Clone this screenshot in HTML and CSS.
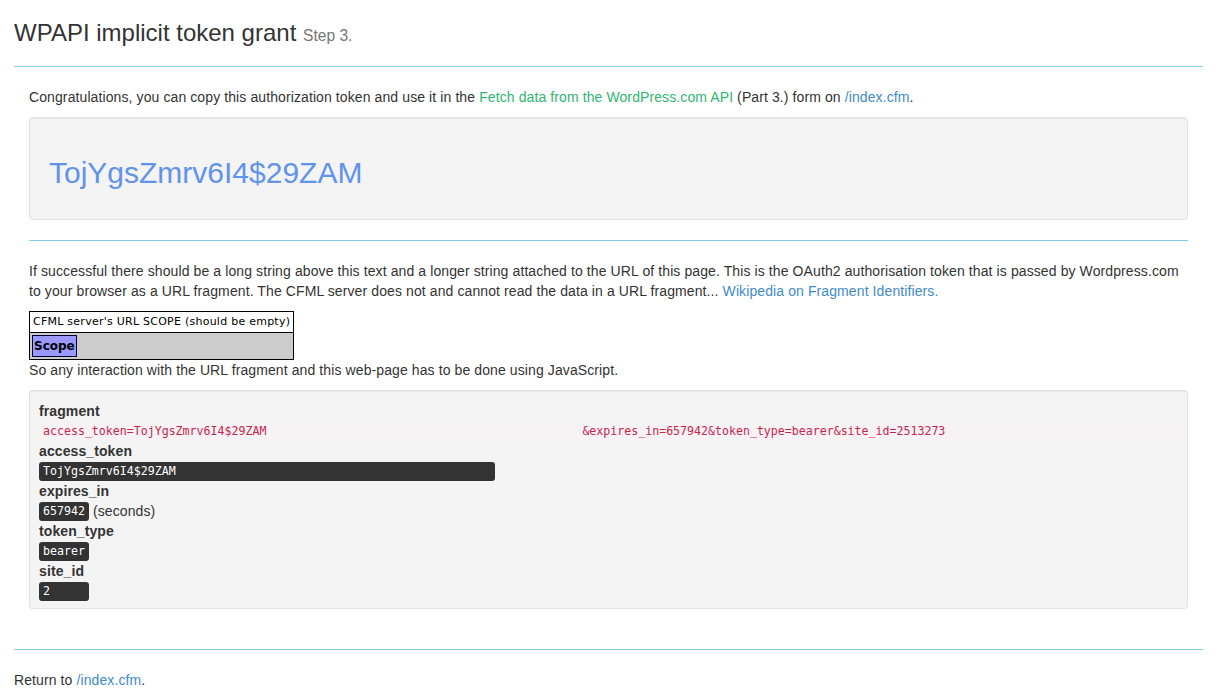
FILE: index.html
```html
<!DOCTYPE html>
<html lang="en">
<head>
<meta charset="utf-8">
<title>WPAPI implicit token grant</title>
<link rel="stylesheet" href="styles.css">
</head>
<body>
<div class="page">
  <h3 class="title">WPAPI implicit token grant <small>Step 3.</small></h3>
  <div class="rule"></div>
  <div class="section">
    <p>Congratulations, you can copy this authorization token and use it in the <a class="green" href="#">Fetch data from the WordPress.com API</a> (Part 3.) form on <a href="#">/index.cfm</a>.</p>
    <div class="well">
      <h2 class="token">TojYgsZmrv6I4$29ZAM</h2>
    </div>
    <div class="rule"></div>
    <p>If successful there should be a long string above this text and a longer string attached to the URL of this page. This is the OAuth2 authorisation token that is passed by Wordpress.com to your browser as a URL fragment. The CFML server does not and cannot read the data in a URL fragment... <a href="#">Wikipedia on Fragment Identifiers.</a></p>
    <div class="scope">
      <div class="scope-head">CFML server's URL SCOPE (should be empty)</div>
      <div class="scope-body"><span class="scope-key">Scope</span></div>
    </div>
    <p class="after-scope">So any interaction with the URL fragment and this web-page has to be done using JavaScript.</p>
    <div class="well well-sm">
      <div class="label">fragment</div>
      <code class="frag"><span>access_token=TojYgsZmrv6I4$29ZAM</span><span class="frag-rest">&amp;expires_in=657942&amp;token_type=bearer&amp;site_id=2513273</span></code>
      <div class="label">access_token</div>
      <div class="line"><span class="kbd kbd-wide">TojYgsZmrv6I4$29ZAM</span></div>
      <div class="label">expires_in</div>
      <div class="line"><span class="kbd">657942</span> (seconds)</div>
      <div class="label">token_type</div>
      <div class="line"><span class="kbd">bearer</span></div>
      <div class="label">site_id</div>
      <div class="line"><span class="kbd">2</span></div>
    </div>
  </div>
  <div class="rule"></div>
  <p>Return to <a href="#">/index.cfm</a>.</p>
</div>
</body>
</html>
```

FILE: styles.css
```css
html, body {
  margin: 0;
  padding: 0;
  background: #fff;
}
body {
  font-family: "Liberation Sans", Arial, sans-serif;
  font-size: 14px;
  line-height: 20px;
  letter-spacing: 0.1px;
  color: #333;
}
a {
  color: #428bca;
  text-decoration: none;
}
a.green {
  color: #2fb672;
}
p {
  margin: 0 0 10px;
}
.page {
  padding: 0 15px 0 14px;
}
.title {
  font-size: 24px;
  font-weight: 500;
  line-height: 27px;
  letter-spacing: 0;
  margin: 19px 0 0;
  color: #333;
}
.title small {
  font-size: 65%;
  font-weight: normal;
  line-height: 1;
  color: #777;
}
.rule {
  height: 1px;
  background-color: #80cfee;
  margin: 20px 0;
}
.section {
  display: flow-root;
  padding: 0 15px;
}
.well {
  background: #f4f4f4;
  border: 1px solid #e3e3e3;
  border-radius: 4px;
  padding: 19px;
  margin-bottom: 20px;
  box-shadow: inset 0 1px 1px rgba(0,0,0,0.05);
}
.well-sm {
  padding: 10px 9px 7px;
  border-radius: 3px;
}
.token {
  font-size: 30px;
  line-height: 33px;
  font-weight: 500;
  letter-spacing: 0;
  margin: 19px 0 11px;
  color: #6193eb;
}
.scope {
  display: inline-block;
  border: 1px solid #000;
  font-family: "DejaVu Sans", Verdana, sans-serif;
  font-size: 11px;
  line-height: 15px;
  letter-spacing: 0.25px;
  color: #000;
  vertical-align: top;
}
.scope-head {
  background: #fff;
  padding: 2px 3px 3px 3px;
  border-bottom: 1px solid #000;
}
.scope-body {
  background: #cccccc;
  padding: 2px;
}
.scope-key {
  display: inline-block;
  background: #9999ff;
  border: 1px solid #000033;
  font-size: 12px;
  font-weight: bold;
  letter-spacing: 0;
  line-height: 16px;
  padding: 2px 1px 2px;
}
.after-scope {
  margin-top: 0;
}
.label {
  font-weight: bold;
  height: 20px;
}
.frag {
  display: block;
  background: #f7f2f4;
  color: #c7254e;
  font-family: "DejaVu Sans Mono", monospace;
  font-size: 11.6px;
  letter-spacing: 0;
  line-height: 20px;
  height: 20px;
  padding: 0 4px;
  border-radius: 3px;
  white-space: nowrap;
}
.frag-rest {
  margin-left: 316px;
}
.line {
  height: 20px;
}
.kbd {
  display: inline-block;
  vertical-align: top;
  box-sizing: border-box;
  min-width: 50px;
  height: 19px;
  line-height: 19px;
  margin-top: 1px;
  padding: 0 4px;
  background: #333;
  color: #fff;
  border-radius: 3px;
  font-family: "DejaVu Sans Mono", monospace;
  font-size: 11.6px;
  letter-spacing: 0;
}
.kbd-wide {
  width: 456px;
}
```
